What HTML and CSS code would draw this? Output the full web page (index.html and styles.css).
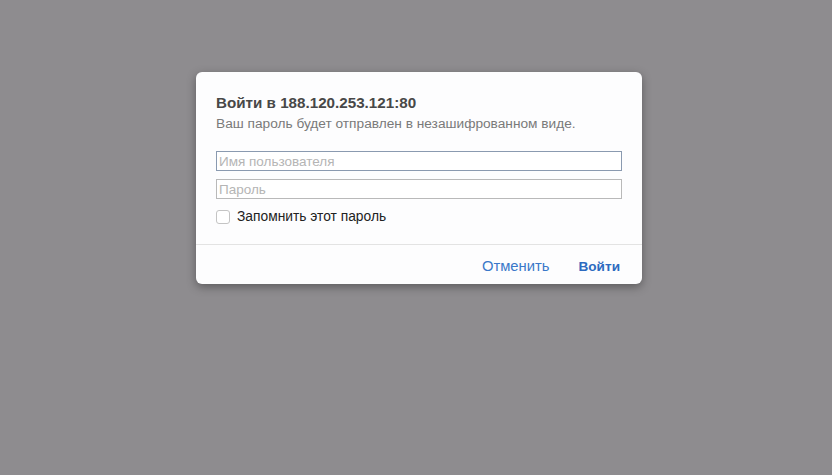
FILE: index.html
```html
<!DOCTYPE html>
<html lang="ru">
<head>
<meta charset="utf-8">
<link rel="stylesheet" href="styles.css">
</head>
<body>
<div class="dialog">
  <div class="content">
    <div class="title">Войти в 188.120.253.121:80</div>
    <div class="subtitle">Ваш пароль будет отправлен в незашифрованном виде.</div>
    <div class="field field-focus"><span class="placeholder">Имя пользователя</span></div>
    <div class="field"><span class="placeholder">Пароль</span></div>
    <label class="remember"><span class="checkbox"></span><span>Запомнить этот пароль</span></label>
  </div>
  <div class="footer">
    <span class="btn">Отменить</span>
    <span class="btn btn-primary">Войти</span>
  </div>
</div>
</body>
</html>
```
FILE: styles.css
```css
html, body {
  margin: 0;
  padding: 0;
}
body {
  background: #8e8c8f;
  height: 475px;
  font-family: "Liberation Sans", Arial, sans-serif;
  overflow: hidden;
}
.dialog {
  margin: 72px 0 0 196px;
  width: 446px;
  height: 212px;
  background: #fdfdfe;
  border-radius: 6px;
  box-shadow: 0 3px 10px rgba(0, 0, 0, 0.35);
  display: flex;
  flex-direction: column;
}
.content {
  padding: 21px 20px 0 20px;
  display: flex;
  flex-direction: column;
}
.title {
  font-size: 15.2px;
  font-weight: bold;
  color: #484848;
  line-height: 19px;
}
.subtitle {
  margin-top: 3px;
  font-size: 13.7px;
  color: #7a7a7a;
  line-height: 17px;
}
.field {
  margin-top: 8px;
  height: 18px;
  border: 1px solid #b9b9b9;
  background: #fff;
  display: flex;
  align-items: center;
  padding-left: 2px;
}
.subtitle + .field {
  margin-top: 19px;
}
.field-focus {
  border-color: #8a9ab0;
}
.placeholder {
  font-size: 13.5px;
  color: #b5b5b5;
}
.remember {
  margin-top: 10px;
  display: flex;
  align-items: center;
  font-size: 13.8px;
  color: #222;
}
.checkbox {
  width: 12px;
  height: 12px;
  border: 1px solid #c4c4c4;
  border-radius: 3px;
  background: #fff;
  margin-right: 7px;
}
.footer {
  margin-top: auto;
  border-top: 1px solid #e3e3e3;
  height: 40px;
  box-sizing: border-box;
  padding: 3px 22px 0 0;
  display: flex;
  justify-content: flex-end;
  align-items: center;
  gap: 29px;
}
.btn {
  font-size: 14.8px;
  color: #3a78c9;
}
.btn-primary {
  font-size: 13.6px;
  font-weight: bold;
  color: #2c6ac0;
}
```
